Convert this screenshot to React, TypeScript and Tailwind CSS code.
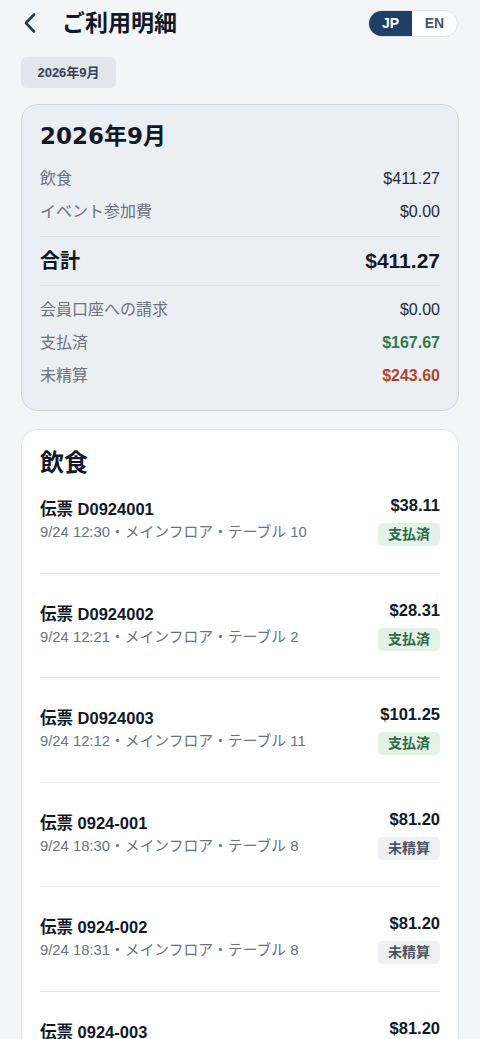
import React from "react";

const items = [
  { id: "伝票 D0924001", sub: "9/24 12:30・メインフロア・テーブル 10", amt: "$38.11", paid: true },
  { id: "伝票 D0924002", sub: "9/24 12:21・メインフロア・テーブル 2", amt: "$28.31", paid: true },
  { id: "伝票 D0924003", sub: "9/24 12:12・メインフロア・テーブル 11", amt: "$101.25", paid: true },
  { id: "伝票 0924-001", sub: "9/24 18:30・メインフロア・テーブル 8", amt: "$81.20", paid: false },
  { id: "伝票 0924-002", sub: "9/24 18:31・メインフロア・テーブル 8", amt: "$81.20", paid: false },
  { id: "伝票 0924-003", sub: "9/24 18:32・メインフロア・テーブル 8", amt: "$81.20", paid: false },
];

function Row({ label, value, valueClass }: { label: string; value: string; valueClass?: string }) {
  return (
    <div className="flex h-[33px] items-center justify-between text-[16px]">
      <span className="text-[#6b7280]">{label}</span>
      <span className={valueClass ?? "text-[#1f2937]"}>{value}</span>
    </div>
  );
}

export default function App() {
  return (
    <div
      className="h-[1039px] w-full overflow-hidden bg-[#f3f5f7] text-[#111827]"
      style={{ fontFamily: '"Liberation Sans", "Noto Sans CJK JP", sans-serif' }}
    >
      {/* Header */}
      <div className="flex h-[46px] items-center justify-between pl-[22px] pr-[22px]">
        <div className="flex items-center">
          <svg width="16" height="24" viewBox="0 0 16 24" className="text-[#1e3a5f]">
            <path d="M12 3.5 L4 12 L12 20.5" fill="none" stroke="currentColor" strokeWidth="2.6" strokeLinecap="round" strokeLinejoin="round" />
          </svg>
          <h1 className="ml-[24px] text-[23px] font-bold leading-[30px] text-[#111827]">ご利用明細</h1>
        </div>
        <div className="flex h-[27px] overflow-hidden rounded-full border border-[#dde1e6] bg-white text-[14px] font-bold">
          <div className="flex w-[43px] items-center justify-center bg-[#1e3f66] text-white">JP</div>
          <div className="flex w-[45px] items-center justify-center text-[#4b5563]">EN</div>
        </div>
      </div>

      {/* Month chip */}
      <div className="mt-[11px] px-[21px]">
        <div className="inline-flex h-[31px] w-[95px] items-center justify-center rounded-[6px] bg-[#e2e6eb] text-[13px] font-bold text-[#334155]">
          2026年9月
        </div>
      </div>

      {/* Summary card */}
      <div className="mx-[21px] mt-[16px] rounded-[16px] border border-[#cfd6de] bg-[#ebeef2] px-[18px] pb-[18px] pt-[17px]">
        <div
          className="text-[23px] font-bold leading-[28px] text-[#111827]"
          style={{ fontFamily: '"DejaVu Sans", "Noto Sans CJK JP", sans-serif' }}
        >
          2026年9月
        </div>
        <div className="mt-[12px]">
          <Row label="飲食" value="$411.27" />
          <Row label="イベント参加費" value="$0.00" />
          <div className="mt-[8px] h-px bg-[#dde2e7]" />
          <div className="my-[8px] flex h-[32px] items-center justify-between">
            <span className="text-[20px] font-bold text-[#111827]">合計</span>
            <span className="text-[21px] font-bold text-[#111827]">$411.27</span>
          </div>
          <div className="h-px bg-[#dde2e7]" />
          <div className="mt-[7px]">
            <Row label="会員口座への請求" value="$0.00" />
            <Row label="支払済" value="$167.67" valueClass="font-bold text-[#2f7a4c]" />
            <Row label="未精算" value="$243.60" valueClass="font-bold text-[#b0452f]" />
          </div>
        </div>
      </div>

      {/* List card */}
      <div className="mx-[21px] mt-[18px] rounded-[16px] border border-[#e1e5ea] bg-white px-[18px] pt-[17px]">
        <h2 className="text-[24px] font-bold leading-[32px] text-[#111827]">飲食</h2>
        <div>
          {items.map((it, i) => (
            <div
              key={i}
              className={
                "flex items-center justify-between pb-[26.5px] " +
                (i === 0 ? "pt-[16px]" : "border-t border-[#e5e7eb] pt-[26px]")
              }
            >
              <div className="flex flex-col">
                <span className="text-[16.5px] font-bold leading-[20px] text-[#111827]">{it.id}</span>
                <span className="mt-[3px] text-[14.8px] leading-[20px] text-[#6b7280]">{it.sub}</span>
              </div>
              <div className="flex flex-col items-end">
                <span className="text-[16.5px] font-bold leading-[20px] text-[#111827]">{it.amt}</span>
                {it.paid ? (
                  <span className="mt-[8px] flex h-[23px] items-center rounded-[5px] bg-[#e4f1e8] px-[10px] text-[14px] font-semibold text-[#2d6a45]">
                    支払済
                  </span>
                ) : (
                  <span className="mt-[8px] flex h-[23px] items-center rounded-[5px] bg-[#eef0f3] px-[10px] text-[14px] font-semibold text-[#4b5563]">
                    未精算
                  </span>
                )}
              </div>
            </div>
          ))}
        </div>
      </div>
    </div>
  );
}
